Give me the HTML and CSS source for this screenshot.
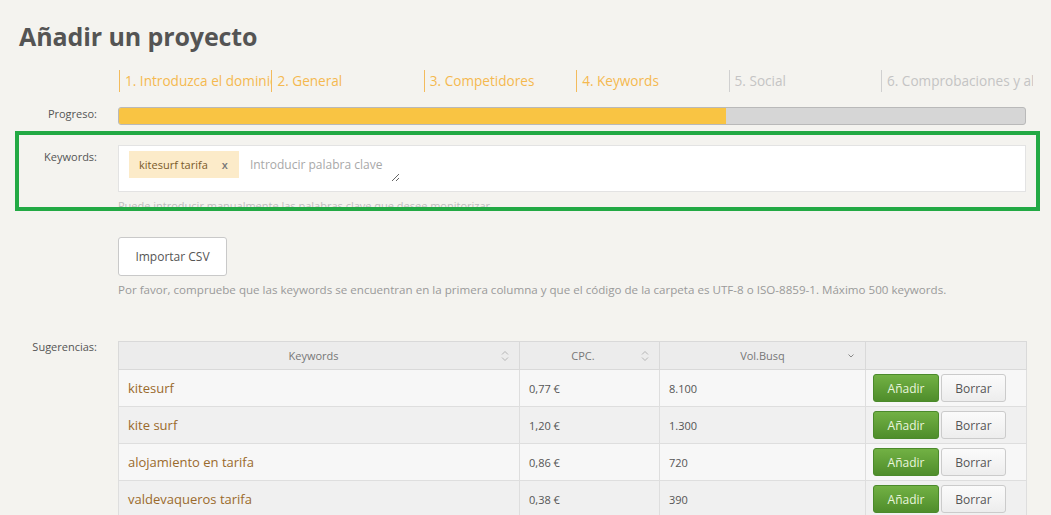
FILE: index.html
```html
<!DOCTYPE html>
<html lang="es">
<head>
<meta charset="utf-8">
<title>Añadir un proyecto</title>
<link rel="stylesheet" href="styles.css">
</head>
<body>
<div class="page">
  <h1 class="title">Añadir un proyecto</h1>

  <div class="row steps-row">
    <div class="label"></div>
    <div class="steps">
      <div class="step done">1. Introduzca el dominio</div>
      <div class="step done">2. General</div>
      <div class="step done">3. Competidores</div>
      <div class="step done">4. Keywords</div>
      <div class="step">5. Social</div>
      <div class="step">6. Comprobaciones y alertas</div>
    </div>
  </div>

  <div class="row progress-row">
    <div class="label">Progreso:</div>
    <div class="progress"><div class="progress-fill" style="width:67%"></div></div>
  </div>

  <div class="highlight">
    <div class="row kw-row">
      <div class="label kw-label">Keywords:</div>
      <div class="kw-field">
        <div class="kw-box">
          <span class="tag">kitesurf tarifa <span class="tag-x">x</span></span>
          <textarea class="kw-input" placeholder="Introducir palabra clave"></textarea>
        </div>
        <div class="help">Puede introducir manualmente las palabras clave que desee monitorizar</div>
      </div>
    </div>
  </div>

  <div class="row import-row">
    <div class="label"></div>
    <div>
      <button class="btn-import">Importar CSV</button>
      <div class="note">Por favor, compruebe que las keywords se encuentran en la primera columna y que el código de la carpeta es UTF-8 o ISO-8859-1. Máximo 500 keywords.</div>
    </div>
  </div>

  <div class="row sug-row">
    <div class="label">Sugerencias:</div>
    <table class="sug">
      <thead>
        <tr>
          <th class="c-kw">Keywords<span class="sort"><svg width="8" height="12" viewBox="0 0 8 12"><path d="M1 4.5 L4 1.5 L7 4.5 M1 7.5 L4 10.5 L7 7.5" fill="none" stroke="#b5b5b5" stroke-width="1"/></svg></span></th>
          <th class="c-cpc">CPC.<span class="sort"><svg width="8" height="12" viewBox="0 0 8 12"><path d="M1 4.5 L4 1.5 L7 4.5 M1 7.5 L4 10.5 L7 7.5" fill="none" stroke="#b5b5b5" stroke-width="1"/></svg></span></th>
          <th class="c-vol">Vol.Busq<span class="sort"><svg width="8" height="12" viewBox="0 0 8 12"><path d="M1.5 4.5 L4 7 L6.5 4.5" fill="none" stroke="#888" stroke-width="1"/></svg></span></th>
          <th class="c-act"></th>
        </tr>
      </thead>
      <tbody>
        <tr>
          <td class="kw">kitesurf</td><td>0,77 €</td><td>8.100</td>
          <td class="act"><button class="btn-add">Añadir</button><button class="btn-del">Borrar</button></td>
        </tr>
        <tr>
          <td class="kw">kite surf</td><td>1,20 €</td><td>1.300</td>
          <td class="act"><button class="btn-add">Añadir</button><button class="btn-del">Borrar</button></td>
        </tr>
        <tr>
          <td class="kw">alojamiento en tarifa</td><td>0,86 €</td><td>720</td>
          <td class="act"><button class="btn-add">Añadir</button><button class="btn-del">Borrar</button></td>
        </tr>
        <tr>
          <td class="kw">valdevaqueros tarifa</td><td>0,38 €</td><td>390</td>
          <td class="act"><button class="btn-add">Añadir</button><button class="btn-del">Borrar</button></td>
        </tr>
      </tbody>
    </table>
  </div>
</div>
</body>
</html>
```
FILE: styles.css
```css
* { box-sizing: border-box; }
html, body { margin: 0; padding: 0; }
body {
  background: #f4f3ef;
  font-family: "Open Sans", "Noto Sans", sans-serif;
  color: #555;
  overflow: hidden;
}
.page { width: 1051px; }
.title {
  margin: 20px 0 0 19px;
  font-size: 25px;
  line-height: 32px;
  font-weight: 700;
  color: #545454;
  letter-spacing: -0.1px;
}
.row {
  display: grid;
  grid-template-columns: 97px 908px;
  column-gap: 21px;
}
.label {
  text-align: right;
  font-size: 11px;
  color: #555;
}
.steps-row { margin-top: 18px; }
.steps {
  display: grid;
  grid-template-columns: repeat(6, 152.4px);
  height: 22px;
  margin-left: 1px;
  width: 914px;
  overflow: hidden;
}
.step {
  border-left: 1px solid #d0d0d0;
  padding-left: 5px;
  font-size: 13.6px;
  line-height: 22px;
  color: #c4c4c4;
  white-space: nowrap;
  overflow: hidden;
}
.step.done { border-left-color: #f3bb5c; color: #f4b94f; }

.progress-row { margin-top: 15px; align-items: start; }
.progress-row .label { line-height: 14px; }
.progress {
  height: 18px;
  border: 1px solid #b9b9b9;
  border-radius: 3px;
  background: #d6d6d6;
  overflow: hidden;
}
.progress-fill { height: 100%; background: #f9c443; }

.highlight {
  margin: 6px 11px 0 15px;
  border: 4px solid #22a944;
  height: 80px;
  overflow: hidden;
}
.kw-row { grid-template-columns: 78px 908px; padding-top: 10px; }
.kw-label { padding-top: 4px; line-height: 15px; }
.kw-box {
  height: 47px;
  background: #fff;
  border: 1px solid #e3e3e3;
  display: flex;
  align-items: flex-start;
  padding: 5px 10px;
}
.tag {
  display: inline-flex;
  align-items: center;
  height: 27px;
  padding: 0 11px 0 10px;
  background: #fcebc9;
  color: #7a5a2a;
  font-size: 11px;
  white-space: nowrap;
}
.tag-x { margin-left: 14px; font-weight: 600; color: #777; font-size: 11px; }
.kw-input {
  margin: 5px 0 0 11px;
  width: 150px;
  height: 26px;
  border: none;
  background: transparent;
  font-family: inherit;
  font-size: 12px;
  color: #555;
  padding: 0;
  outline: none;
}
.kw-input::placeholder { color: #a8a8a8; }
.help { margin-top: 5px; font-size: 11px; color: #bdbdbd; line-height: 18px; white-space: nowrap; }

.import-row { margin-top: 26px; }
.btn-import {
  display: block;
  width: 109px;
  height: 39px;
  background: #fff;
  border: 1px solid #c9c9c9;
  border-radius: 3px;
  font-family: inherit;
  font-size: 12px;
  color: #555;
  padding: 0;
}
.note { margin-top: 6px; font-size: 11.6px; line-height: 16px; color: #9a9a9a; white-space: nowrap; }

.sug-row { margin-top: 43px; }
.sug-row .label { line-height: 12px; }
.sug {
  border-collapse: collapse;
  width: 908px;
  font-size: 11px;
  table-layout: fixed;
}
.sug th {
  height: 28px;
  background: #ececec;
  border: 1px solid #d9d9d9;
  font-weight: 400;
  color: #777;
  position: relative;
  font-size: 11px;
}
.sort { position: absolute; right: 10px; top: 8px; line-height: 0; }
.c-kw { width: 401px; padding-right: 12px; }
.c-cpc { width: 140px; padding-right: 14px; }
.c-vol { width: 206px; }
.c-act { width: 161px; }
.sug td {
  height: 37px;
  border: 1px solid #dedede;
  padding: 0 9px;
  color: #555;
  background: #f7f7f7;
}
.sug tbody tr:nth-child(even) td { background: #f0f0f0; }
.sug td.kw { color: #9a6a2c; font-size: 13px; }
.sug td.act { padding: 0 0 0 7px; white-space: nowrap; }
.btn-add, .btn-del {
  display: inline-block;
  vertical-align: middle;
  height: 28px;
  border-radius: 3px;
  font-family: inherit;
  font-size: 12px;
  padding: 0;
}
.btn-add {
  width: 66px;
  background: linear-gradient(#72b144, #4f8d2b);
  border: 1px solid #4b8a2b;
  color: #e9f5dc;
}
.btn-del {
  width: 65px;
  margin-left: 2px;
  background: linear-gradient(#fbfbfb, #ededed);
  border: 1px solid #cbcbcb;
  color: #555;
}
```
